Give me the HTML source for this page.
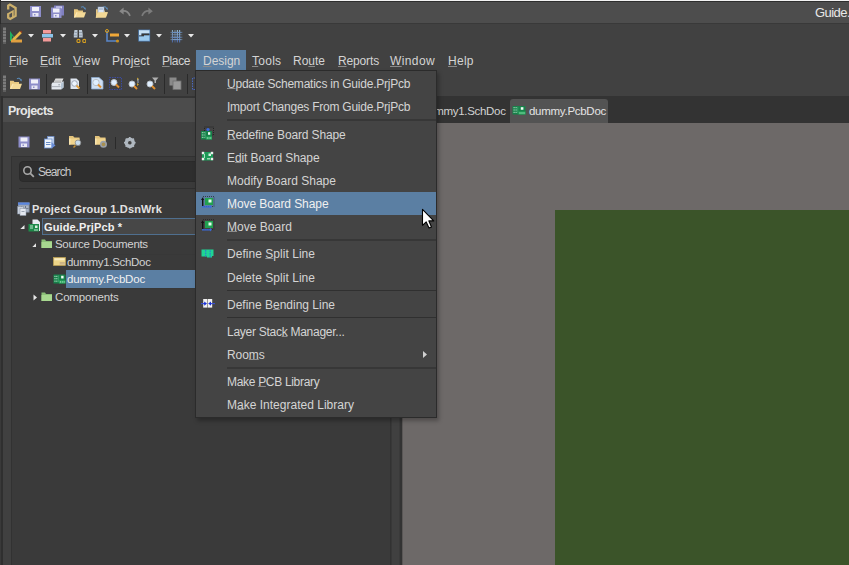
<!DOCTYPE html>
<html><head><meta charset="utf-8">
<style>
*{margin:0;padding:0;box-sizing:border-box}
html,body{width:849px;height:565px;overflow:hidden;background:#414141;font-family:"Liberation Sans",sans-serif;}
.a{position:absolute;display:block}
.t{position:absolute;white-space:nowrap;line-height:14px}
u{text-decoration:underline;text-underline-offset:0px;text-decoration-thickness:1px;text-decoration-color:#8c8c8c}
u.m{text-underline-offset:1px}
</style></head><body>
<div class="a" style="left:0px;top:0px;width:849px;height:565px;background:#414141;"></div>
<div class="a" style="left:0px;top:0px;width:849px;height:1px;background:#f2f2f2;"></div>
<div class="a" style="left:0px;top:1px;width:849px;height:1px;background:#2e2e2e;"></div>
<div class="a" style="left:0px;top:2px;width:849px;height:21px;background:#4d4d4d;"></div>
<div class="a" style="left:0px;top:23px;width:849px;height:1px;background:#393939;"></div>
<div class="a" style="left:0px;top:24px;width:849px;height:72px;background:#414141;"></div>
<div class="a" style="left:0px;top:0px;width:1px;height:24px;background:#2c2c2c;"></div>
<div class="a" style="left:0px;top:24px;width:1px;height:541px;background:#393939;"></div>
<div class="a" style="left:0px;top:96px;width:849px;height:2px;background:#353535;"></div>
<div class="a" style="left:1px;top:96px;width:2px;height:469px;background:#2f2f2f;"></div>
<div class="a" style="left:3px;top:98px;width:387px;height:24px;background:#4c4c4c;"></div>
<div class="a" style="left:3px;top:122px;width:387px;height:443px;background:#404040;"></div>
<div class="a" style="left:11px;top:156px;width:379px;height:409px;background:#3a3a3a;border-left:1px solid #323232;border-top:1px solid #323232"></div>
<div class="a" style="left:19px;top:161px;width:371px;height:21px;background:#2e2e2e;border-radius:4px;border:1px solid #2a2a2a"></div>
<div class="a" style="left:19px;top:188px;width:371px;height:1px;background:#2f2f2f;"></div>
<div class="a" style="left:390px;top:96px;width:1px;height:469px;background:#323232;"></div>
<div class="a" style="left:391px;top:96px;width:1px;height:469px;background:#383838;"></div>
<div class="a" style="left:392px;top:96px;width:7px;height:469px;background:#404040;"></div>
<div class="a" style="left:399px;top:96px;width:1px;height:469px;background:#3a3a3a;"></div>
<div class="a" style="left:400px;top:96px;width:2px;height:469px;background:#333333;"></div>
<div class="a" style="left:42px;top:218px;width:348px;height:17px;background:#474747;border:1px solid #4f6f8f"></div>
<div class="a" style="left:66px;top:270px;width:324px;height:18px;background:#5b7fa3;"></div>
<div class="a" style="left:53px;top:254px;width:337px;height:1px;background:#383838;"></div>
<div class="a" style="left:53px;top:288px;width:337px;height:1px;background:#383838;"></div>
<div class="a" style="left:402px;top:96px;width:447px;height:27px;background:#333333;"></div>
<div class="a" style="left:510px;top:99px;width:98px;height:24px;background:#535353;border-radius:3px 3px 0 0"></div>
<div class="a" style="left:402px;top:123px;width:447px;height:442px;background:#6d6968;"></div>
<div class="a" style="left:402px;top:123px;width:1px;height:442px;background:#5a5756;"></div>
<div class="a" style="left:555px;top:210px;width:294px;height:355px;background:#3b5429;"></div>
<div class="a" style="left:196px;top:50px;width:50px;height:20px;background:#5b7fa3;"></div>
<div class="t" style="left:9px;top:54px;font-size:12px;font-weight:normal;color:#d4d4d4;letter-spacing:-0.086px"><u class="m">F</u>ile</div>
<div class="t" style="left:40px;top:54px;font-size:12px;font-weight:normal;color:#d4d4d4;letter-spacing:0.028px"><u class="m">E</u>dit</div>
<div class="t" style="left:73px;top:54px;font-size:12px;font-weight:normal;color:#d4d4d4;letter-spacing:0.351px"><u class="m">V</u>iew</div>
<div class="t" style="left:112px;top:54px;font-size:12px;font-weight:normal;color:#d4d4d4;letter-spacing:0.020px">Proj<u class="m">e</u>ct</div>
<div class="t" style="left:162px;top:54px;font-size:12px;font-weight:normal;color:#d4d4d4;letter-spacing:-0.406px"><u class="m">P</u>lace</div>
<div class="t" style="left:203px;top:54px;font-size:12px;font-weight:normal;color:#d4d4d4;letter-spacing:-0.027px"><u class="m">D</u>esign</div>
<div class="t" style="left:252px;top:54px;font-size:12px;font-weight:normal;color:#d4d4d4;letter-spacing:0.257px"><u class="m">T</u>ools</div>
<div class="t" style="left:293px;top:54px;font-size:12px;font-weight:normal;color:#d4d4d4;letter-spacing:-0.006px">Ro<u class="m">u</u>te</div>
<div class="t" style="left:338px;top:54px;font-size:12px;font-weight:normal;color:#d4d4d4;letter-spacing:-0.147px"><u class="m">R</u>eports</div>
<div class="t" style="left:390px;top:54px;font-size:12px;font-weight:normal;color:#d4d4d4;letter-spacing:0.385px"><u class="m">W</u>indow</div>
<div class="t" style="left:448px;top:54px;font-size:12px;font-weight:normal;color:#d4d4d4;letter-spacing:0.278px"><u class="m">H</u>elp</div>
<div class="t" style="left:8px;top:104px;font-size:12.5px;font-weight:bold;color:#e6e6e6;letter-spacing:-0.543px">Projects</div>
<div class="t" style="left:38px;top:165px;font-size:12px;font-weight:normal;color:#c8c8c8;letter-spacing:-0.922px">Search</div>
<div class="t" style="left:32px;top:202px;font-size:11px;font-weight:bold;color:#e2e2e2;letter-spacing:0.139px">Project Group 1.DsnWrk</div>
<div class="t" style="left:44px;top:220px;font-size:11px;font-weight:bold;color:#f0f0f0;letter-spacing:0.127px">Guide.PrjPcb *</div>
<div class="t" style="left:55px;top:237px;font-size:11.5px;font-weight:normal;color:#d2d2d2;letter-spacing:-0.312px">Source Documents</div>
<div class="t" style="left:67px;top:255px;font-size:11.5px;font-weight:normal;color:#d2d2d2;letter-spacing:-0.305px">dummy1.SchDoc</div>
<div class="t" style="left:67px;top:272px;font-size:11.5px;font-weight:normal;color:#f0f0f0;letter-spacing:-0.193px">dummy.PcbDoc</div>
<div class="t" style="left:55px;top:290px;font-size:11.5px;font-weight:normal;color:#d2d2d2;letter-spacing:-0.172px">Components</div>
<div class="t" style="left:815px;top:6px;font-size:13px;font-weight:normal;color:#e8e8e8;letter-spacing:-0.550px">Guide.PrjPcb - Altium Designer</div>
<div class="t" style="left:422px;top:104px;font-size:11.5px;font-weight:normal;color:#d2d2d2;letter-spacing:-0.305px">dummy1.SchDoc</div>
<div class="t" style="left:529px;top:104px;font-size:11.5px;font-weight:normal;color:#e4e4e4;letter-spacing:-0.276px">dummy.PcbDoc</div>
<svg class="a" style="left:6px;top:3px" width="12" height="18" viewBox="0 0 12 18"><g fill="none" stroke="#ccb06c" stroke-linejoin="miter" stroke-miterlimit="3"><path d="M2.2 6.5 L2.2 2.7 L3.9 1.6 L9.6 4.9 L9.6 12.9 L4.2 15.9 L2.2 14.6 L2.2 10.6" stroke-width="2.3"/><path d="M1.6 11.2 L6.9 8.3 L6.9 14.2" stroke-width="1.7"/></g></svg>
<svg class="a" style="left:30px;top:6px" width="12" height="12" viewBox="0 0 12 12"><g transform="translate(0,0)"><rect x="0" y="0" width="11" height="11" fill="#8d8dc9"/><rect x="2" y="1" width="7" height="4" fill="#f0f0f8"/><rect x="2.5" y="7" width="6" height="3.5" fill="#e8e8f4"/><rect x="4" y="8" width="1.5" height="1.5" fill="#8d8dc9"/></g></svg>
<svg class="a" style="left:51px;top:5px" width="14" height="14" viewBox="0 0 14 14"><rect x="3" y="0.5" width="10" height="10" fill="#7f7fc0"/><rect x="5" y="1.5" width="6" height="2" fill="#e8e8f8"/><g transform="translate(0,2.5)"><rect x="0" y="0" width="10.5" height="10.5" fill="#8d8dc9"/><rect x="2" y="1" width="6.5" height="4" fill="#f0f0f8"/><rect x="2.5" y="6.5" width="5.5" height="3.5" fill="#e8e8f4"/><rect x="4" y="7.5" width="1.5" height="1.5" fill="#8d8dc9"/></g></svg>
<svg class="a" style="left:73px;top:5px" width="14" height="13" viewBox="0 0 14 13"><g transform="translate(0.5,0.5)"><path d="M0.5 5 L0.5 3.8 L4 3.8 L5 5 L9.5 5 L9.5 7 L0.5 12Z" fill="#e8c880"/><path d="M0.5 12 L3 6.8 L12.5 6.8 L10.5 12Z" fill="#f4da98"/><path d="M0.5 12 L3 6.8 L4 6.8 L1.8 12Z" fill="#fbe8b8"/><path d="M7.5 1.8 Q9.8 0.2 11.3 3.2" fill="none" stroke="#5a8ab8" stroke-width="1.1"/><path d="M10.2 3 L12.3 4.6 L12.2 2Z" fill="#5a8ab8"/></g></svg>
<svg class="a" style="left:95px;top:5px" width="14" height="13" viewBox="0 0 14 13"><g transform="translate(0.5,0.5)"><path d="M0.5 5 L0.5 3.8 L4 3.8 L5 5 L9.5 5 L9.5 7 L0.5 12Z" fill="#e8c880"/><path d="M0.5 12 L3 6.8 L12.5 6.8 L10.5 12Z" fill="#f4da98"/><path d="M0.5 12 L3 6.8 L4 6.8 L1.8 12Z" fill="#fbe8b8"/><path d="M7.5 1.8 Q9.8 0.2 11.3 3.2" fill="none" stroke="#5a8ab8" stroke-width="1.1"/><path d="M10.2 3 L12.3 4.6 L12.2 2Z" fill="#5a8ab8"/></g><rect x="3" y="2" width="6" height="6.5" fill="#dce6f4" stroke="#8aa0c0" stroke-width="0.6"/><rect x="4" y="3.5" width="4" height="1" fill="#8aa0c0"/><path d="M0.5 12.5 L3 7.3 L12.5 7.3 L10.5 12.5Z" fill="#f2d896"/></svg>
<svg class="a" style="left:118px;top:6px" width="14" height="11" viewBox="0 0 14 11"><path d="M4 5 Q9.5 4 12 9.8" fill="none" stroke="#888888" stroke-width="1.7"/><path d="M1.2 5.2 L5.6 1.6 L5.6 8.6Z" fill="#888888"/></svg>
<svg class="a" style="left:140px;top:6px" width="14" height="11" viewBox="0 0 14 11"><path d="M10 5 Q4.5 4 2 9.8" fill="none" stroke="#7c7c7c" stroke-width="1.7"/><path d="M12.8 5.2 L8.4 1.6 L8.4 8.6Z" fill="#7c7c7c"/></svg>
<svg class="a" style="left:3px;top:27px" width="3" height="17" viewBox="0 0 3 17"><rect x="0" y="0" width="3" height="17" fill="#5e5e5e"/><rect x="0" y="1" width="3" height="2" fill="#7c7c7c"/><rect x="0" y="4" width="3" height="2" fill="#7c7c7c"/><rect x="0" y="7" width="3" height="2" fill="#7c7c7c"/><rect x="0" y="10" width="3" height="2" fill="#7c7c7c"/><rect x="0" y="13" width="3" height="2" fill="#7c7c7c"/></svg>
<svg class="a" style="left:3px;top:75px" width="3" height="17" viewBox="0 0 3 17"><rect x="0" y="0" width="3" height="17" fill="#5e5e5e"/><rect x="0" y="1" width="3" height="2" fill="#7c7c7c"/><rect x="0" y="4" width="3" height="2" fill="#7c7c7c"/><rect x="0" y="7" width="3" height="2" fill="#7c7c7c"/><rect x="0" y="10" width="3" height="2" fill="#7c7c7c"/><rect x="0" y="13" width="3" height="2" fill="#7c7c7c"/></svg>
<svg class="a" style="left:9px;top:29px" width="15" height="15" viewBox="0 0 15 15"><path d="M1 2 L1 12 L8 12Z" fill="#20b060"/><path d="M3 6.5 L3 10 L5.5 10Z" fill="#414141"/><path d="M4 11 L12 3" stroke="#e8b64a" stroke-width="2.6"/><path d="M11.5 2 L13 3.5" stroke="#8a3a20" stroke-width="1.5"/><rect x="2" y="10.5" width="11" height="3" fill="#e0a040"/></svg>
<svg class="a" style="left:28px;top:34px" width="6" height="4" viewBox="0 0 6 4"><path d="M0 0 L6 0 L3 3.5Z" fill="#e8e8e8"/></svg>
<svg class="a" style="left:42px;top:30px" width="12" height="12" viewBox="0 0 12 12"><rect x="1" y="0" width="8" height="3.5" fill="#f39a9a"/><rect x="0" y="4" width="11" height="3.5" fill="#8cc4ea"/><rect x="1" y="8" width="8" height="3.5" fill="#f39a9a"/></svg>
<svg class="a" style="left:60px;top:34px" width="6" height="4" viewBox="0 0 6 4"><path d="M0 0 L6 0 L3 3.5Z" fill="#e8e8e8"/></svg>
<svg class="a" style="left:73px;top:29px" width="13" height="14" viewBox="0 0 13 14"><path d="M1.5 1 L4.5 1 L4.5 8.5 L0.8 8.5 L0.8 5Z" fill="#bcc8d4"/><path d="M6 1 L9 1 L9.7 5 L9.7 8.5 L6 8.5Z" fill="#bcc8d4"/><rect x="1.5" y="3.2" width="3" height="0.8" fill="#8a96a4"/><rect x="6" y="3.2" width="3" height="0.8" fill="#8a96a4"/><rect x="1" y="5.8" width="3.5" height="0.8" fill="#8a96a4"/><rect x="6" y="5.8" width="3.5" height="0.8" fill="#8a96a4"/><circle cx="5.5" cy="12" r="1.6" fill="none" stroke="#d8a020" stroke-width="1.1"/><circle cx="11.3" cy="12" r="1.6" fill="none" stroke="#d8a020" stroke-width="1.1"/></svg>
<svg class="a" style="left:92px;top:34px" width="6" height="4" viewBox="0 0 6 4"><path d="M0 0 L6 0 L3 3.5Z" fill="#e8e8e8"/></svg>
<svg class="a" style="left:105px;top:29px" width="15" height="14" viewBox="0 0 15 14"><path d="M2 2 L2 12 L12 12" fill="none" stroke="#5a86c8" stroke-width="1.6"/><circle cx="2" cy="2" r="1.5" fill="none" stroke="#d8a020" stroke-width="1"/><circle cx="12.5" cy="12" r="1.6" fill="#c89020"/><rect x="5" y="4.5" width="9" height="3" fill="#f0a838"/></svg>
<svg class="a" style="left:124px;top:34px" width="6" height="4" viewBox="0 0 6 4"><path d="M0 0 L6 0 L3 3.5Z" fill="#e8e8e8"/></svg>
<svg class="a" style="left:138px;top:29px" width="13" height="14" viewBox="0 0 13 14"><rect x="0.3" y="0.6" width="11.8" height="11.9" fill="#5080b8"/><path d="M1 1.3 L11.4 1.3 L11.4 4.5 L3.5 4.5 L3.5 6.5 L1 6.5Z" fill="#c6e0f4"/><path d="M1 11.8 L11.4 11.8 L11.4 6.2 L6 6.2 L6 7.3 L1 7.3Z" fill="#9ccaee"/><path d="M1 6.5 L3.5 6.5 L3.5 4.5 L11.4 4.5 L11.4 6.2 L6 6.2 L6 7.3 L1 7.3Z" fill="#3a3a3a"/></svg>
<svg class="a" style="left:156px;top:34px" width="6" height="4" viewBox="0 0 6 4"><path d="M0 0 L6 0 L3 3.5Z" fill="#e8e8e8"/></svg>
<svg class="a" style="left:170px;top:29px" width="13" height="14" viewBox="0 0 13 14"><defs><linearGradient id="gg" x1="0" y1="0" x2="0" y2="1"><stop offset="0" stop-color="#94bcd8"/><stop offset="1" stop-color="#4e6eb0"/></linearGradient><linearGradient id="gh" x1="0" y1="0" x2="1" y2="0"><stop offset="0" stop-color="#414141" stop-opacity="0.7"/><stop offset="0.25" stop-color="#414141" stop-opacity="0"/><stop offset="0.75" stop-color="#414141" stop-opacity="0"/><stop offset="1" stop-color="#414141" stop-opacity="0.7"/></linearGradient></defs><g fill="url(#gg)"><rect x="1.9" y="1" width="1.1" height="12.5"/><rect x="4.5" y="1" width="1" height="12.5" opacity="0.6"/><rect x="6.8" y="1" width="1.1" height="12.5"/><rect x="9.1" y="1" width="1.1" height="12.5"/><rect x="0.2" y="2.9" width="12.3" height="1.1"/><rect x="0.2" y="5.3" width="12.3" height="1" opacity="0.6"/><rect x="0.2" y="7.8" width="12.3" height="1.1"/><rect x="0.2" y="10.1" width="12.3" height="1.1"/></g><rect x="0" y="0" width="13" height="14" fill="url(#gh)"/></svg>
<svg class="a" style="left:188px;top:34px" width="6" height="4" viewBox="0 0 6 4"><path d="M0 0 L6 0 L3 3.5Z" fill="#e8e8e8"/></svg>
<svg class="a" style="left:9px;top:77px" width="14" height="13" viewBox="0 0 14 13"><g transform="translate(0.5,0)"><path d="M0.5 5 L0.5 3.8 L4 3.8 L5 5 L9.5 5 L9.5 7 L0.5 12Z" fill="#e8c880"/><path d="M0.5 12 L3 6.8 L12.5 6.8 L10.5 12Z" fill="#f4da98"/><path d="M0.5 12 L3 6.8 L4 6.8 L1.8 12Z" fill="#fbe8b8"/><path d="M7.5 1.8 Q9.8 0.2 11.3 3.2" fill="none" stroke="#5a8ab8" stroke-width="1.1"/><path d="M10.2 3 L12.3 4.6 L12.2 2Z" fill="#5a8ab8"/></g></svg>
<svg class="a" style="left:29px;top:78px" width="11" height="12" viewBox="0 0 11 12"><g transform="translate(0,0.5)"><rect x="0" y="0" width="11" height="11" fill="#8d8dc9"/><rect x="2" y="1" width="7" height="4" fill="#f0f0f8"/><rect x="2.5" y="7" width="6" height="3.5" fill="#e8e8f4"/><rect x="4" y="8" width="1.5" height="1.5" fill="#8d8dc9"/></g></svg>
<svg class="a" style="left:46px;top:74px" width="1" height="20" viewBox="0 0 1 20"><rect width="1" height="20" fill="#2a2a2a"/></svg>
<svg class="a" style="left:87px;top:74px" width="1" height="20" viewBox="0 0 1 20"><rect width="1" height="20" fill="#2a2a2a"/></svg>
<svg class="a" style="left:164px;top:74px" width="1" height="20" viewBox="0 0 1 20"><rect width="1" height="20" fill="#2a2a2a"/></svg>
<svg class="a" style="left:187px;top:74px" width="1" height="20" viewBox="0 0 1 20"><rect width="1" height="20" fill="#2a2a2a"/></svg>
<svg class="a" style="left:51px;top:78px" width="14" height="13" viewBox="0 0 14 13"><path d="M4.5 0.5 L12.5 0.5 L10.5 4.5 L2.5 4.5Z" fill="#e8e8e8"/><g fill="#b0b0b0"><rect x="4" y="1.8" width="6.5" height="0.7"/><rect x="3.5" y="3.2" width="6.5" height="0.7"/></g><path d="M1.5 4.5 L10 4.5 L12.5 3 L12.5 9.5 L10 11.5 L0.5 11.5 L0.5 6Z" fill="#e4e8ee"/><path d="M10 5.5 L12.5 3.8 L12.5 9.5 L10 11.5Z" fill="#b4c4d4"/><rect x="1" y="8.3" width="8.5" height="0.8" fill="#9aa0a8"/><rect x="7.5" y="6.3" width="1.2" height="1" fill="#707880"/></svg>
<svg class="a" style="left:70px;top:78px" width="11" height="12" viewBox="0 0 11 12"><path d="M0.5 0.5 L6.5 0.5 L9 3 L9 11 L0.5 11Z" fill="#dfe6f0"/><circle cx="4.5" cy="5.5" r="2.8" fill="#eef6ff" stroke="#a0a8b8" stroke-width="1"/><path d="M6.5 7.5 L9.5 10.5" stroke="#e0a040" stroke-width="1.8"/></svg>
<svg class="a" style="left:91px;top:77px" width="13" height="13" viewBox="0 0 13 13"><path d="M0.5 0.5 L8 0.5 L12 4 L12 12 L0.5 12Z" fill="#cfe0f4" stroke="#8aa8cc" stroke-width="0.8"/><circle cx="5" cy="5.5" r="3.2" fill="#dfefff" stroke="#b8c0c8" stroke-width="1"/><path d="M7 7.5 L10 10.5" stroke="#e09030" stroke-width="2"/></svg>
<svg class="a" style="left:109px;top:77px" width="14" height="13" viewBox="0 0 14 13"><rect x="0.5" y="0.5" width="12" height="12" fill="none" stroke="#3a4aa0" stroke-width="1" stroke-dasharray="1.5,1"/><circle cx="5" cy="5.5" r="3" fill="#dfefff" stroke="#b8c0c8" stroke-width="1"/><path d="M7 7.5 L10 10.5" stroke="#e09030" stroke-width="2"/></svg>
<svg class="a" style="left:128px;top:77px" width="14" height="13" viewBox="0 0 14 13"><circle cx="4" cy="7" r="3" fill="#dfefff" stroke="#b8c0c8" stroke-width="1"/><path d="M6 9 L9 12" stroke="#e09030" stroke-width="2"/><path d="M9 0.5 L11 2 L9 4Z M9 6 L11 7.5 L9 9Z" fill="#c8a030"/><rect x="9.5" y="2" width="1" height="4" fill="#9ab"/></svg>
<svg class="a" style="left:146px;top:77px" width="13" height="13" viewBox="0 0 13 13"><circle cx="4" cy="7" r="3" fill="#dfefff" stroke="#b8c0c8" stroke-width="1"/><path d="M6 9 L9 12" stroke="#e09030" stroke-width="2"/><path d="M6 0.5 L12.5 0.5 L10 3.5 L10 6 L8.5 6 L8.5 3.5Z" fill="#b0b0b0"/></svg>
<svg class="a" style="left:169px;top:77px" width="13" height="13" viewBox="0 0 13 13"><rect x="0.5" y="0.5" width="7" height="8" fill="#8a8a8a"/><rect x="4" y="4" width="8" height="8.5" fill="#9a9a9a" stroke="#707070" stroke-width="0.8"/></svg>
<svg class="a" style="left:191px;top:77px" width="5" height="14" viewBox="0 0 5 14"><path d="M4 1 L1.5 1 L1.5 12.5 L4 12.5" fill="none" stroke="#4a68c0" stroke-width="1" stroke-dasharray="1.5,1"/></svg>
<svg class="a" style="left:18px;top:136px" width="12" height="12" viewBox="0 0 12 12"><g transform="translate(0.5,0.5)"><rect x="0" y="0" width="11" height="11" fill="#8d8dc9"/><rect x="2" y="1" width="7" height="4" fill="#f0f0f8"/><rect x="2.5" y="7" width="6" height="3.5" fill="#e8e8f4"/><rect x="4" y="8" width="1.5" height="1.5" fill="#8d8dc9"/></g></svg>
<svg class="a" style="left:44px;top:136px" width="12" height="13" viewBox="0 0 12 13"><rect x="3.5" y="0.5" width="6.5" height="8" fill="#d8e4f4" stroke="#6a8ccc" stroke-width="0.7"/><rect x="0.5" y="3" width="7.5" height="9" fill="#eef4fc" stroke="#6a90d0" stroke-width="0.8"/><rect x="2" y="6" width="4.5" height="0.9" fill="#5a80c0"/><rect x="2" y="8" width="4.5" height="0.9" fill="#5a80c0"/><path d="M7.5 6 L11.5 9.5 L7.5 12.5Z" fill="#6a8ed8"/></svg>
<svg class="a" style="left:68px;top:135px" width="14" height="14" viewBox="0 0 14 14"><g transform="translate(0.5,0.5)"><path d="M0.5 0.5 L4.5 0.5 L6 2 L11 2 L11 9 L0.5 9Z" fill="#e2c27a"/><rect x="0.5" y="3" width="10.5" height="6" fill="#f0d48e"/><rect x="0.5" y="3" width="1.5" height="6" fill="#f8e4b0"/></g><circle cx="10" cy="7.8" r="2.8" fill="#c8dcec" stroke="#888" stroke-width="0.8"/><path d="M7.5 10.5 L5.5 12.5" stroke="#c89030" stroke-width="1.5"/></svg>
<svg class="a" style="left:94px;top:135px" width="14" height="14" viewBox="0 0 14 14"><g transform="translate(0.5,0.5)"><path d="M0.5 0.5 L4.5 0.5 L6 2 L11 2 L11 9 L0.5 9Z" fill="#e2c27a"/><rect x="0.5" y="3" width="10.5" height="6" fill="#f0d48e"/><rect x="0.5" y="3" width="1.5" height="6" fill="#f8e4b0"/></g><circle cx="9.5" cy="9.3" r="2.7" fill="#a89050" stroke="#9aa0a8" stroke-width="1.6"/></svg>
<svg class="a" style="left:115px;top:137px" width="1" height="12" viewBox="0 0 1 12"><rect width="1" height="12" fill="#2a2a2a"/></svg>
<svg class="a" style="left:123px;top:136px" width="14" height="14" viewBox="0 0 14 14"><circle cx="6.8" cy="6.7" r="3.7" fill="none" stroke="#b0b8c0" stroke-width="3"/><g stroke="#b0b8c0" stroke-width="1.6"><path d="M6.8 6.7 L12.60 6.70"/><path d="M6.8 6.7 L10.90 10.80"/><path d="M6.8 6.7 L6.80 12.50"/><path d="M6.8 6.7 L2.70 10.80"/><path d="M6.8 6.7 L1.00 6.70"/><path d="M6.8 6.7 L2.70 2.60"/><path d="M6.8 6.7 L6.80 0.90"/><path d="M6.8 6.7 L10.90 2.60"/></g><circle cx="6.8" cy="6.7" r="1.8" fill="#404040"/></svg>
<svg class="a" style="left:22px;top:165px" width="14" height="13" viewBox="0 0 14 13"><circle cx="5.5" cy="5.5" r="3.7" fill="none" stroke="#a8a8a8" stroke-width="1.6"/><path d="M8.3 8.3 L11.8 11.8" stroke="#a8a8a8" stroke-width="1.8"/></svg>
<svg class="a" style="left:17px;top:202px" width="13" height="14" viewBox="0 0 13 14"><rect x="1" y="0.5" width="11.5" height="10" fill="#8a96aa"/><rect x="1" y="0.5" width="11.5" height="2.2" fill="#5a86e0"/><rect x="2" y="3.5" width="9.5" height="6" fill="#aab4c4"/><g fill="#6a7486"><rect x="4" y="4" width="1" height="5"/><rect x="8" y="4" width="1" height="5"/><rect x="2" y="6" width="9.5" height="0.8"/></g><rect x="0.5" y="4.5" width="6" height="7.5" fill="#c8d0dc" stroke="#7a8494" stroke-width="0.5"/><rect x="3" y="6.5" width="6" height="7" fill="#e4e8f0" stroke="#8a94a4" stroke-width="0.5"/><rect x="4.5" y="9" width="3" height="0.8" fill="#8a94a4"/></svg>
<svg class="a" style="left:20px;top:225px" width="5" height="4" viewBox="0 0 5 4"><path d="M4.5 0 L4.5 4 L0.3 4Z" fill="#e8e8e8"/></svg>
<svg class="a" style="left:28px;top:219px" width="13" height="14" viewBox="0 0 13 14"><path d="M4.5 0.5 L9.5 0.5 L12 3 L12 12 L4.5 12Z" fill="#e8eaf0"/><rect x="0.5" y="5" width="10.5" height="7.5" fill="#1f8a4a"/><rect x="2" y="6.5" width="3" height="1" fill="#bfe8cf"/><rect x="2" y="8.5" width="3" height="1" fill="#bfe8cf"/><rect x="7" y="6.5" width="2.5" height="2.5" fill="#d8f0e0"/><rect x="6" y="10.5" width="4" height="1" fill="#bfe8cf"/></svg>
<svg class="a" style="left:32px;top:243px" width="5" height="5" viewBox="0 0 5 5"><path d="M4 0.3 L4 4 L0.3 4Z" fill="#e4e4e4"/></svg>
<svg class="a" style="left:41px;top:239px" width="12" height="10" viewBox="0 0 12 10"><g transform="translate(0,0)"><path d="M0.5 0.5 L4 0.5 L5 2 L11 2 L11 9 L0.5 9Z" fill="#8cc078"/><rect x="0.5" y="3" width="10.5" height="6" fill="#a8d890"/></g></svg>
<svg class="a" style="left:53px;top:257px" width="13" height="9" viewBox="0 0 13 9"><rect x="0.5" y="0.5" width="12" height="8" fill="#ecd488"/><rect x="1.5" y="1.3" width="10" height="2" fill="#f8ecc0"/><rect x="6.5" y="5" width="5.5" height="3" fill="#d8c090"/><rect x="7" y="5.6" width="4.5" height="0.7" fill="#b8a070"/><rect x="0.5" y="0.5" width="12" height="8" fill="none" stroke="#c8a850" stroke-width="0.6"/></svg>
<svg class="a" style="left:53px;top:274px" width="13" height="10" viewBox="0 0 13 10"><g transform="translate(0.5,0.5) scale(0.923,1.047)"><rect x="0" y="0" width="13" height="8.6" rx="0.6" fill="#17824a"/><g fill="#d4f0e0"><rect x="1" y="1.3" width="1.2" height="0.9"/><rect x="3" y="1.3" width="1.2" height="0.9"/><rect x="1" y="3.6" width="1.2" height="0.9"/><rect x="3" y="3.6" width="1.2" height="0.9"/><rect x="1" y="5.9" width="1.2" height="0.9"/><rect x="3" y="5.9" width="1.2" height="0.9"/></g><rect x="5" y="0.8" width="0.7" height="6.5" fill="#4aa878"/><rect x="8.3" y="1.2" width="2.6" height="2.6" fill="#f0fff6"/><rect x="6" y="5.6" width="7" height="3" fill="#2aa860"/><g fill="#c8f0d8"><rect x="7" y="6.6" width="1" height="1"/><rect x="9" y="6.6" width="1" height="1"/><rect x="11" y="6.6" width="1" height="1"/></g></g></svg>
<svg class="a" style="left:33px;top:294px" width="5" height="7" viewBox="0 0 5 7"><path d="M0.5 0.5 L4 3.5 L0.5 6.5Z" fill="#e8e8e8"/></svg>
<svg class="a" style="left:41px;top:292px" width="12" height="10" viewBox="0 0 12 10"><g transform="translate(0,0)"><path d="M0.5 0.5 L4 0.5 L5 2 L11 2 L11 9 L0.5 9Z" fill="#8cc078"/><rect x="0.5" y="3" width="10.5" height="6" fill="#a8d890"/></g></svg>
<svg class="a" style="left:512px;top:106px" width="14" height="9" viewBox="0 0 14 9"><g transform="translate(0.5,0) scale(1.000,0.988)"><rect x="0" y="0" width="13" height="8.6" rx="0.6" fill="#17824a"/><g fill="#d4f0e0"><rect x="1" y="1.3" width="1.2" height="0.9"/><rect x="3" y="1.3" width="1.2" height="0.9"/><rect x="1" y="3.6" width="1.2" height="0.9"/><rect x="3" y="3.6" width="1.2" height="0.9"/><rect x="1" y="5.9" width="1.2" height="0.9"/><rect x="3" y="5.9" width="1.2" height="0.9"/></g><rect x="5" y="0.8" width="0.7" height="6.5" fill="#4aa878"/><rect x="8.3" y="1.2" width="2.6" height="2.6" fill="#f0fff6"/><rect x="6" y="5.6" width="7" height="3" fill="#2aa860"/><g fill="#c8f0d8"><rect x="7" y="6.6" width="1" height="1"/><rect x="9" y="6.6" width="1" height="1"/><rect x="11" y="6.6" width="1" height="1"/></g></g></svg>
<div class="a" style="left:195px;top:70px;width:242px;height:348px;background:#444444;border:1px solid #2b2b2b;box-shadow:2px 3px 4px rgba(0,0,0,0.28)"></div>
<div class="a" style="left:196px;top:192px;width:240px;height:23px;background:#5b7fa3"></div>
<div class="a" style="left:227px;top:119px;width:209px;height:2px;background:#373737"></div>
<div class="a" style="left:227px;top:239px;width:209px;height:2px;background:#373737"></div>
<div class="a" style="left:227px;top:290px;width:209px;height:1px;background:#303030"></div>
<div class="a" style="left:227px;top:317px;width:209px;height:1px;background:#303030"></div>
<div class="a" style="left:227px;top:367px;width:209px;height:2px;background:#373737"></div>
<svg class="a" style="left:422px;top:350px" width="6" height="9"><path d="M1 1 L5 4.5 L1 8Z" fill="#d0d0d0"/></svg>
<div class="t" style="left:227px;top:77px;font-size:12px;font-weight:normal;color:#d4d4d4;letter-spacing:-0.229px"><u>U</u>pdate Schematics in Guide.PrjPcb</div>
<div class="t" style="left:227px;top:100px;font-size:12px;font-weight:normal;color:#d4d4d4;letter-spacing:-0.236px"><u>I</u>mport Changes From Guide.PrjPcb</div>
<div class="t" style="left:227px;top:128px;font-size:12px;font-weight:normal;color:#d4d4d4;letter-spacing:-0.147px"><u>R</u>edefine Board Shape</div>
<div class="t" style="left:227px;top:151px;font-size:12px;font-weight:normal;color:#d4d4d4;letter-spacing:-0.099px">E<u>d</u>it Board Shape</div>
<div class="t" style="left:227px;top:174px;font-size:12px;font-weight:normal;color:#d4d4d4;letter-spacing:0.015px">Modify Board Shape</div>
<div class="t" style="left:227px;top:197px;font-size:12px;font-weight:normal;color:#f0f0f0;letter-spacing:-0.077px"><u>M</u>ove Board Shape</div>
<div class="t" style="left:227px;top:220px;font-size:12px;font-weight:normal;color:#d4d4d4;letter-spacing:0.030px"><u>M</u>ove Board</div>
<div class="t" style="left:227px;top:247px;font-size:12px;font-weight:normal;color:#d4d4d4;letter-spacing:0.036px">Define <u>S</u>plit Line</div>
<div class="t" style="left:227px;top:271px;font-size:12px;font-weight:normal;color:#d4d4d4;letter-spacing:0.036px">Delete Split Line</div>
<div class="t" style="left:227px;top:298px;font-size:12px;font-weight:normal;color:#d4d4d4;letter-spacing:-0.005px">Define B<u>e</u>nding Line</div>
<div class="t" style="left:227px;top:325px;font-size:12px;font-weight:normal;color:#d4d4d4;letter-spacing:-0.268px">Layer Stac<u>k</u> Manager...</div>
<div class="t" style="left:227px;top:348px;font-size:12px;font-weight:normal;color:#d4d4d4;letter-spacing:-0.083px">Roo<u>m</u>s</div>
<div class="t" style="left:227px;top:375px;font-size:12px;font-weight:normal;color:#d4d4d4;letter-spacing:-0.311px">Make <u>P</u>CB Library</div>
<div class="t" style="left:227px;top:398px;font-size:12px;font-weight:normal;color:#d4d4d4;letter-spacing:0.012px">M<u>a</u>ke Integrated Library</div>
<svg class="a" style="left:200px;top:126px" width="15" height="14" viewBox="0 0 15 14"><rect x="4.5" y="1" width="9" height="8" fill="none" stroke="#1a1a1a" stroke-width="0.8" stroke-dasharray="1,1"/><circle cx="8" cy="3.5" r="1.6" fill="#3a6ae0"/><g transform="translate(1,5) scale(0.846,0.988)"><rect x="0" y="0" width="13" height="8.6" rx="0.6" fill="#17824a"/><g fill="#d4f0e0"><rect x="1" y="1.3" width="1.2" height="0.9"/><rect x="3" y="1.3" width="1.2" height="0.9"/><rect x="1" y="3.6" width="1.2" height="0.9"/><rect x="3" y="3.6" width="1.2" height="0.9"/><rect x="1" y="5.9" width="1.2" height="0.9"/><rect x="3" y="5.9" width="1.2" height="0.9"/></g><rect x="5" y="0.8" width="0.7" height="6.5" fill="#4aa878"/><rect x="8.3" y="1.2" width="2.6" height="2.6" fill="#f0fff6"/><rect x="6" y="5.6" width="7" height="3" fill="#2aa860"/><g fill="#c8f0d8"><rect x="7" y="6.6" width="1" height="1"/><rect x="9" y="6.6" width="1" height="1"/><rect x="11" y="6.6" width="1" height="1"/></g></g></svg>
<svg class="a" style="left:201px;top:151px" width="13" height="10" viewBox="0 0 13 10"><rect x="1" y="1" width="11" height="8.5" fill="#1e9a58"/><rect x="3" y="3" width="1" height="4" fill="#a8e0c0"/><rect x="7.5" y="2.5" width="2.5" height="2.5" fill="#d8f4e4"/><rect x="6" y="7" width="3" height="1.5" fill="#9ad8b0"/><rect x="0.8" y="0.8" width="2.4" height="2.4" fill="#eeeeee"/><rect x="9.8" y="0.8" width="2.4" height="2.4" fill="#eeeeee"/><rect x="0.8" y="6.8" width="2.4" height="2.4" fill="#eeeeee"/><rect x="9.8" y="6.8" width="2.4" height="2.4" fill="#eeeeee"/></svg>
<svg class="a" style="left:201px;top:196px" width="15" height="13" viewBox="0 0 15 13"><g transform="translate(0,0)"><rect x="2" y="0.5" width="11" height="10" fill="none" stroke="#222" stroke-width="0.7" stroke-dasharray="1,1"/><rect x="4" y="2" width="8" height="7" fill="#22a050"/><rect x="7.5" y="3.5" width="3" height="3" fill="#e8fff0"/><rect x="1" y="3" width="1.3" height="7" fill="#111"/><path d="M0 4 L1.6 1.5 L3.2 4Z" fill="#111"/><rect x="1" y="10.2" width="8" height="1.3" fill="#3a6ae0"/><path d="M9 9 L11 10.8 L9 12.5Z" fill="#3a6ae0"/></g></svg>
<svg class="a" style="left:201px;top:219px" width="15" height="13" viewBox="0 0 15 13"><g transform="translate(0,0)"><rect x="2" y="0.5" width="11" height="10" fill="none" stroke="#222" stroke-width="0.7" stroke-dasharray="1,1"/><rect x="4" y="2" width="8" height="7" fill="#22a050"/><rect x="7.5" y="3.5" width="3" height="3" fill="#e8fff0"/><rect x="1" y="3" width="1.3" height="7" fill="#111"/><path d="M0 4 L1.6 1.5 L3.2 4Z" fill="#111"/><rect x="1" y="10.2" width="8" height="1.3" fill="#3a6ae0"/><path d="M9 9 L11 10.8 L9 12.5Z" fill="#3a6ae0"/></g></svg>
<svg class="a" style="left:201px;top:249px" width="14" height="9" viewBox="0 0 14 9"><path d="M0.5 0.5 L12.5 0.5 L12.5 7 L11 7 L11 8.5 L6 8.5 L6 7.5 L0.5 7.5Z" fill="#1ed494"/><g fill="#2a86c8"><rect x="4" y="1" width="1.3" height="1.6"/><rect x="4" y="3.6" width="1.3" height="1.6"/><rect x="4" y="6" width="1.3" height="1.5"/><rect x="8.5" y="1.5" width="1.3" height="1.6"/><rect x="8.5" y="4" width="1.3" height="1.6"/><rect x="8.5" y="6.5" width="1.3" height="1.6"/></g></svg>
<svg class="a" style="left:200px;top:298px" width="16" height="11" viewBox="0 0 16 11"><rect x="3.2" y="1" width="3.8" height="8.6" fill="#f2f2f2"/><rect x="8" y="1" width="4.2" height="8.6" fill="#f2f2f2"/><rect x="7" y="1" width="1" height="8.6" fill="#9a9a9a"/><rect x="1" y="5" width="5" height="1.2" fill="#3a50d0"/><path d="M7 5.6 L4.2 3.4 L4.2 7.8Z" fill="#1a30d8"/><rect x="10" y="5" width="5" height="1.2" fill="#3a50d0"/><path d="M8.2 5.6 L11 3.4 L11 7.8Z" fill="#1a30d8"/></svg>
<svg class="a" style="left:421px;top:208px" width="15" height="22" viewBox="0 0 15 22"><path d="M1.5 1.3 L1.5 17.3 L5.2 13.9 L8 20 L10.5 19 L7.8 12.9 L12.7 12.9Z" fill="#ffffff" stroke="#000" stroke-width="1.1" stroke-linejoin="round"/></svg>
</body></html>
